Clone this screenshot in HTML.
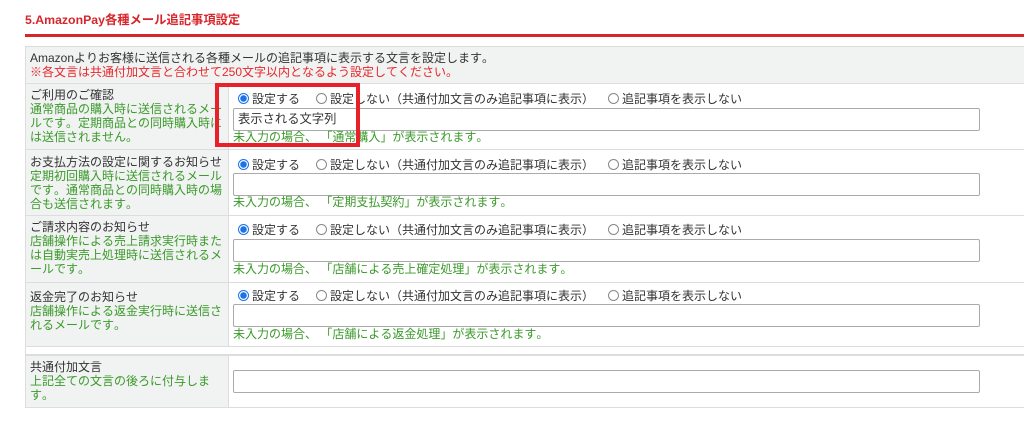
<!DOCTYPE html><html><head><meta charset="utf-8"><style>
*{margin:0;padding:0;box-sizing:border-box}
body{width:1024px;height:427px;background:#fff;position:relative;overflow:hidden;font-family:"Liberation Sans","Noto Sans CJK JP",sans-serif;font-size:12px;color:#333;line-height:14px;font-kerning:none;text-spacing-trim:space-all;font-feature-settings:"palt" 0,"halt" 0}
.a{position:absolute;white-space:nowrap}
.g{color:#3a9a2a}
.r{color:#e8272a}
.cell{position:absolute;border:1px solid #ddd}
.l{background:#f1f2f2}
.in{position:absolute;left:233px;width:747px;height:23px;border:1px solid #aaa;border-radius:2px;background:#fff;padding:3px 4px;font-size:12.3px;color:#333}
.rad{position:absolute;width:11px;height:11px;border-radius:50%;border:1px solid #888;background:#fff}
.rad.on{border:1px solid #1a73e8;background:radial-gradient(circle,#1a73e8 0 3px,#fff 3.5px)}
</style></head><body>
<div class="a" style="left:25px;top:13px;font-weight:bold;color:#d7262b;font-size:12.3px">5.AmazonPay各種メール追記事項設定</div>
<div style="position:absolute;left:25px;top:34px;width:999px;height:3px;background:#d7262b"></div>

<div class="cell l" style="left:25px;top:46px;width:1010px;height:38px"></div>
<div class="a" style="left:30px;top:51px">Amazonよりお客様に送信される各種メールの追記事項に表示する文言を設定します。</div>
<div class="a r" style="left:30px;top:65px">※各文言は共通付加文言と合わせて250文字以内となるよう設定してください。</div>

<div class="cell l" style="left:25px;top:83px;width:204px;height:67px"></div>
<div class="cell" style="left:228px;top:83px;width:807px;height:67px"></div>
<div class="cell l" style="left:25px;top:149px;width:204px;height:67px"></div>
<div class="cell" style="left:228px;top:149px;width:807px;height:67px"></div>
<div class="cell l" style="left:25px;top:215px;width:204px;height:68px"></div>
<div class="cell" style="left:228px;top:215px;width:807px;height:68px"></div>
<div class="cell l" style="left:25px;top:282px;width:204px;height:65px"></div>
<div class="cell" style="left:228px;top:282px;width:807px;height:65px"></div>
<div class="cell l" style="left:25px;top:346px;width:1010px;height:9px;background:#fff"></div>
<div class="cell l" style="left:25px;top:355px;width:204px;height:53px"></div>
<div class="cell" style="left:228px;top:355px;width:807px;height:53px"></div>

<div class="a" style="left:30px;top:88px">ご利用のご確認</div>
<div class="a g" style="left:30px;top:102px;line-height:14px">通常商品の購入時に送信されるメー<br>ルです。定期商品との同時購入時に<br>は送信されません。</div>
<div class="a" style="left:30px;top:155px">お支払方法の設定に関するお知らせ</div>
<div class="a g" style="left:30px;top:169px">定期初回購入時に送信されるメール<br>です。通常商品との同時購入時の場<br>合も送信されます。</div>
<div class="a" style="left:30px;top:220px">ご請求内容のお知らせ</div>
<div class="a g" style="left:30px;top:234px">店舗操作による売上請求実行時また<br>は自動実売上処理時に送信されるメ<br>ールです。</div>
<div class="a" style="left:30px;top:290px">返金完了のお知らせ</div>
<div class="a g" style="left:30px;top:304px">店舗操作による返金実行時に送信さ<br>れるメールです。</div>
<div class="a" style="left:30px;top:360px">共通付加文言</div>
<div class="a g" style="left:30px;top:374px">上記全ての文言の後ろに付与しま<br>す。</div>

<div class="rad on" style="left:238px;top:93px"></div><div class="a" style="left:252px;top:92px">設定する</div>
<div class="rad" style="left:316px;top:93px"></div><div class="a" style="left:330px;top:92px">設定しない（共通付加文言のみ追記事項に表示）</div>
<div class="rad" style="left:608px;top:93px"></div><div class="a" style="left:622px;top:92px">追記事項を表示しない</div>
<div class="in" style="top:108px">表示される文字列</div>
<div class="a g" style="left:233px;top:130px">未入力の場合、&nbsp;「通常購入」が表示されます。</div>

<div class="rad on" style="left:238px;top:159px"></div><div class="a" style="left:252px;top:158px">設定する</div>
<div class="rad" style="left:316px;top:159px"></div><div class="a" style="left:330px;top:158px">設定しない（共通付加文言のみ追記事項に表示）</div>
<div class="rad" style="left:608px;top:159px"></div><div class="a" style="left:622px;top:158px">追記事項を表示しない</div>
<div class="in" style="top:173px"></div>
<div class="a g" style="left:233px;top:195px">未入力の場合、&nbsp;「定期支払契約」が表示されます。</div>

<div class="rad on" style="left:238px;top:224px"></div><div class="a" style="left:252px;top:223px">設定する</div>
<div class="rad" style="left:316px;top:224px"></div><div class="a" style="left:330px;top:223px">設定しない（共通付加文言のみ追記事項に表示）</div>
<div class="rad" style="left:608px;top:224px"></div><div class="a" style="left:622px;top:223px">追記事項を表示しない</div>
<div class="in" style="top:239px"></div>
<div class="a g" style="left:233px;top:262px">未入力の場合、&nbsp;「店舗による売上確定処理」が表示されます。</div>

<div class="rad on" style="left:238px;top:290px"></div><div class="a" style="left:252px;top:289px">設定する</div>
<div class="rad" style="left:316px;top:290px"></div><div class="a" style="left:330px;top:289px">設定しない（共通付加文言のみ追記事項に表示）</div>
<div class="rad" style="left:608px;top:290px"></div><div class="a" style="left:622px;top:289px">追記事項を表示しない</div>
<div class="in" style="top:304px"></div>
<div class="a g" style="left:233px;top:327px">未入力の場合、&nbsp;「店舗による返金処理」が表示されます。</div>

<div class="in" style="top:370px"></div>

<div style="position:absolute;left:215px;top:83px;width:145px;height:64px;border:4px solid #e8202a"></div>
</body></html>
